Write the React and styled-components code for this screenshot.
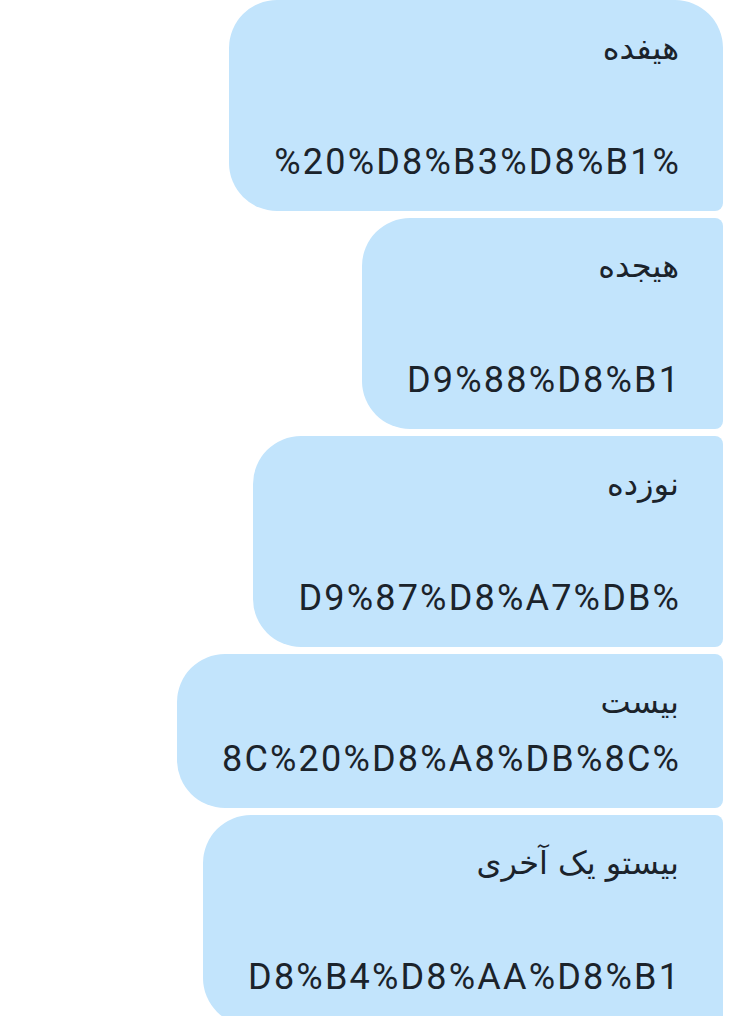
import React from "react";
import styled, { createGlobalStyle } from "styled-components";

const GlobalStyle = createGlobalStyle`
  html, body {
    margin: 0;
    padding: 0;
    background: #ffffff;
    overflow: hidden;
  }
`;

const MESSAGES = [
  { id: 17, title: "هیفده", code: "%20%D8%B3%D8%B1%", spaced: true, first: true },
  { id: 18, title: "هیجده", code: "D9%88%D8%B1", spaced: true },
  { id: 19, title: "نوزده", code: "D9%87%D8%A7%DB%", spaced: true },
  { id: 20, title: "بیست", code: "8C%20%D8%A8%DB%8C%", spaced: false },
  { id: 21, title: "بیستو یک آخری", code: "D8%B4%D8%AA%D8%B1", spaced: true },
];

const App = () => {
  return (
    <>
      <GlobalStyle />
      <ChatList>
        {MESSAGES.map((msg) => (
          <Bubble key={msg.id} first={msg.first ? 1 : 0}>
            <PersianLine dir="rtl">{msg.title}</PersianLine>
            {msg.spaced && <EmptyLine />}
            <CodeLine>{msg.code}</CodeLine>
          </Bubble>
        ))}
      </ChatList>
    </>
  );
};

export default App;

const ChatList = styled.div`
  display: flex;
  flex-direction: column;
  align-items: flex-end;
  gap: 7px;
  padding: 0 22px 0 0;
`;

const Bubble = styled.div`
  display: flex;
  flex-direction: column;
  align-items: flex-end;
  padding: 20px 44px 20px 45px;
  background-color: #c2e4fc;
  color: #1b232b;
  border-radius: ${(p) => (p.first ? "48px 48px 8px 48px" : "48px 8px 8px 48px")};
  font-family: Roboto, "Noto Sans", "DejaVu Sans", sans-serif;
  font-size: 36px;
  line-height: 57px;
`;

const PersianLine = styled.div`
  font-family: "DejaVu Sans", "Noto Sans", sans-serif;
  font-size: 32px;
  white-space: nowrap;
`;

const EmptyLine = styled.div`
  height: 57px;
`;

const CodeLine = styled.div`
  white-space: nowrap;
  letter-spacing: 2.2px;
  margin-right: -2.2px;
`;
